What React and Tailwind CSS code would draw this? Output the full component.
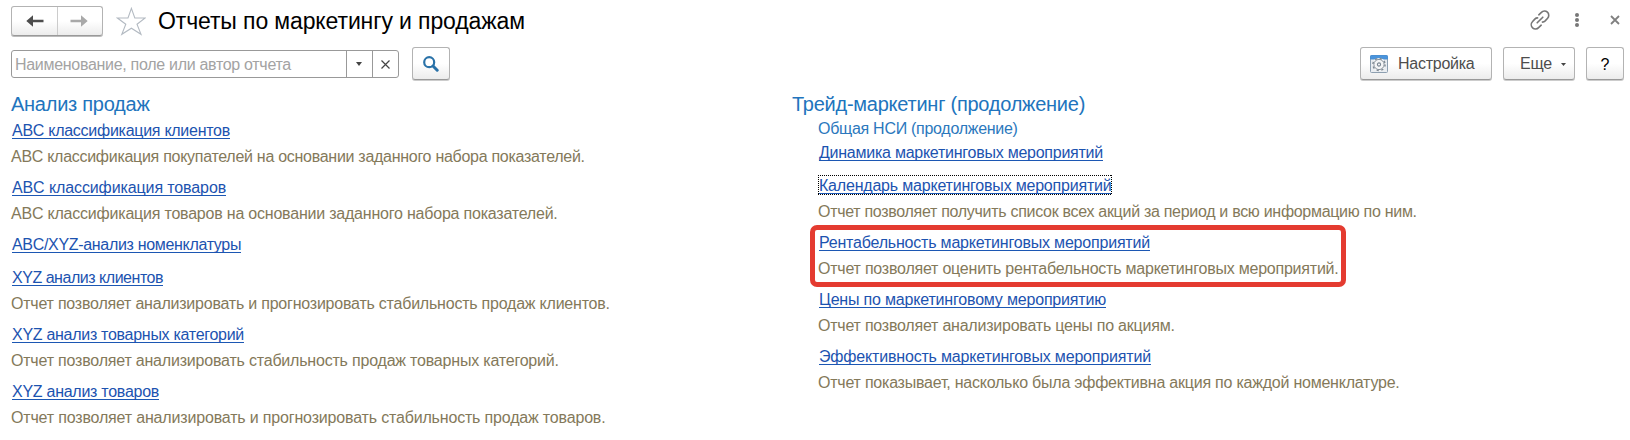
const salesReports = [
  { title: 'ABC классификация клиентов', tk: 'tracking-[-0.27px]', text: 'ABC классификация покупателей на основании заданного набора показателей.', dk: 'tracking-[-0.283px]' },
  { title: 'ABC классификация товаров', tk: 'tracking-[-0.11px]', text: 'ABC классификация товаров на основании заданного набора показателей.', dk: 'tracking-[-0.212px]' },
  { title: 'ABC/XYZ-анализ номенклатуры', tk: 'tracking-[-0.32px]' },
  { title: 'XYZ анализ клиентов', tk: 'tracking-[-0.47px]', text: 'Отчет позволяет анализировать и прогнозировать стабильность продаж клиентов.', dk: 'tracking-[-0.221px]' },
  { title: 'XYZ анализ товарных категорий', tk: 'tracking-[-0.286px]', text: 'Отчет позволяет анализировать стабильность продаж товарных категорий.', dk: 'tracking-[-0.2px]' },
  { title: 'XYZ анализ товаров', tk: 'tracking-[-0.267px]', text: 'Отчет позволяет анализировать и прогнозировать стабильность продаж товаров.', dk: 'tracking-[-0.172px]' },
];

const tradeReports = [
  { title: 'Динамика маркетинговых мероприятий', tk: 'tracking-[-0.25px]' },
  { title: 'Календарь маркетинговых мероприятий', tk: 'tracking-[-0.2px]', text: 'Отчет позволяет получить список всех акций за период и всю информацию по ним.', dk: 'tracking-[-0.298px]', focused: true },
  { title: 'Рентабельность маркетинговых мероприятий', tk: 'tracking-[-0.2px]', text: 'Отчет позволяет оценить рентабельность маркетинговых мероприятий.', dk: 'tracking-[-0.222px]', marked: true },
  { title: 'Цены по маркетинговому мероприятию', tk: 'tracking-[-0.185px]', text: 'Отчет позволяет анализировать цены по акциям.', dk: 'tracking-[-0.224px]' },
  { title: 'Эффективность маркетинговых мероприятий', tk: 'tracking-[-0.177px]', text: 'Отчет показывает, насколько была эффективна акция по каждой номенклатуре.', dk: 'tracking-[-0.226px]' },
];

const button =
  'flex h-[33px] items-center rounded-[3px] border border-[#b3b3b3] border-b-[#999] bg-linear-to-b from-white from-50% to-[#ececec] shadow-[0_1px_0_#ccc]';

function Report({ title, tk, text, dk, focused, marked }) {
  return (
    <li className={`relative flex flex-col items-start ${text ? 'h-[57px]' : 'h-[33px]'}`}>
      <a href="#" className={`relative ml-px h-[19px] border-b border-[#1c57b3] leading-[22px] text-[#1c53b0] ${tk}`}>
        {title}
        {focused && (
          <svg className="absolute top-0 -left-px h-[21px] w-[294px]" fill="none" stroke="#000" strokeDasharray="1 1" shapeRendering="crispEdges">
            <path d="M0 0.5H294M0 19.5H294M0.5 0V20M293.5 0V20" />
          </svg>
        )}
      </a>
      {text && <p className={`mt-[7px] leading-[22px] text-[#84795a] ${dk}`}>{text}</p>}
      {marked && <div className="absolute -top-[7px] -left-2 h-[62px] w-[536px] rounded-[7px] border-5 border-[#e43b30]" />}
    </li>
  );
}

function NavArrow({ flip, color }) {
  return (
    <svg width="18" height="12" viewBox="0 0 18 12" fill={color} className={flip ? 'rotate-180' : ''}>
      <path d="M0.3 6 L7 0.2 V4.7 H17.5 V7.3 H7 V11.8 Z" />
    </svg>
  );
}

function SettingsIcon() {
  return (
    <svg width="18" height="18" viewBox="0 0 18 18" fill="none">
      <rect x="0.5" y="0.5" width="17" height="17" rx="1" fill="#e9edf1" stroke="#8d9fb0" />
      <path d="M0.5 4V1.5a1 1 0 0 1 1-1h15a1 1 0 0 1 1 1V4z" fill="#4a94dc" stroke="#4a8fd2" />
      <circle cx="9" cy="9.5" r="6.6" fill="#f4f5f6" />
      <circle cx="9" cy="9.5" r="6.1" stroke="#7f8a94" strokeWidth="1.4" strokeDasharray="2.2 2.59" />
      <circle cx="9" cy="9.5" r="5.1" stroke="#7f8a94" strokeWidth="0.9" />
      <circle cx="9" cy="9.5" r="1.6" stroke="#788591" strokeWidth="1.1" />
    </svg>
  );
}

export default function App() {
  return (
    <main className="h-[440px] w-[1630px] overflow-hidden bg-white font-['Liberation_Sans',Arial,sans-serif] text-base whitespace-nowrap">
      <header className="flex h-[47px] items-start pt-1.5 pr-[6px] pl-[11px]">
        <div className="flex h-[30px] w-[92px] rounded-[3px] border border-[#b3b3b3] border-b-[#999] bg-linear-to-b from-white from-50% to-[#ececec] shadow-[0_1px_0_#bbb]">
          <button className="flex w-[46px] items-center justify-center border-r border-[#ccc]"><NavArrow color="#4d4d4d" /></button>
          <button className="flex flex-1 items-center justify-center pr-0.5"><NavArrow flip color="#a9a9a9" /></button>
        </div>
        <svg className="mt-px ml-[13px]" width="30" height="29" viewBox="0 0 30 29" fill="none" stroke="#b3bac2" strokeWidth="1.1">
          <path d="M15.4 1.4 L18.8 11 H29.2 L21 17.2 L25 27.3 L15.4 21.2 L5.8 27.3 L9.8 17.2 L1.4 11 H12 Z" />
        </svg>
        <h1 className="ml-3 text-[23px] leading-[30px] tracking-[-0.12px] text-black">Отчеты по маркетингу и продажам</h1>
        <div className="ml-auto flex h-7 items-center">
          <svg width="20" height="20" viewBox="0 0 20 20" fill="none" stroke="#777" strokeWidth="1.6" strokeLinecap="round">
            <path d="M8.8 4.8 L11.4 2.4 A3.9 3.9 0 0 1 17.6 8.2 L15.2 10.9 A4 4 0 0 1 12.4 12.1" />
            <path d="M11.2 15.2 L8.6 17.6 A3.9 3.9 0 0 1 2.4 11.8 L4.8 9.1 A4 4 0 0 1 7.6 7.9" />
            <path d="M7.2 12.8 L12.8 7.2" />
          </svg>
          <svg className="ml-[24px]" width="6" height="16" viewBox="0 0 6 16" fill="#777">
            <circle cx="3" cy="3" r="2" /><circle cx="3" cy="8" r="2" /><circle cx="3" cy="13" r="2" />
          </svg>
          <svg className="mr-[4px] ml-[30px]" width="10" height="10" viewBox="0 0 10 10" stroke="#808080" strokeWidth="1.8">
            <path d="M1 1 L9 9 M9 1 L1 9" />
          </svg>
        </div>
      </header>

      <div className="flex h-[45px] items-start pr-[6px] pl-[11px]">
        <div className="mt-[3px] flex h-7 w-[388px] rounded-[3px] border border-[#999] bg-white">
          <span className="w-[335px] border-r border-[#999] pl-[3px] leading-[27px] tracking-[-0.3px] text-[#a3a3a3]">Наименование, поле или автор отчета</span>
          <button className="flex w-[26px] items-center justify-center border-r border-[#999] pr-px">
            <svg width="6" height="4" viewBox="0 0 6 4" fill="#444"><path d="M0 0H6L3 4Z" /></svg>
          </button>
          <button className="flex flex-1 items-center justify-center pr-px">
            <svg width="9" height="9" viewBox="0 0 9 9" stroke="#444" strokeWidth="1.2"><path d="M0.5 0.5L8.5 8.5M8.5 0.5L0.5 8.5" /></svg>
          </button>
        </div>
        <button className={`${button} ml-[13px] w-[38px] justify-center pr-px`}>
          <svg width="16" height="16" viewBox="0 0 16 16" fill="none" stroke="#2a72a8">
            <circle cx="6.2" cy="6.2" r="5" strokeWidth="2.2" />
            <path d="M10 10 L14.2 14.2" strokeWidth="3" strokeLinecap="round" />
          </svg>
        </button>
        <button className={`${button} ml-auto w-[132px] pl-[9px] text-[#4d4d4d]`}>
          <SettingsIcon />
          <span className="ml-2.5 tracking-[-0.25px]">Настройка</span>
        </button>
        <button className={`${button} ml-[11px] w-[72px] pl-4 text-[#4d4d4d]`}>
          <span className="tracking-[-0.2px]">Еще</span>
          <svg className="mt-px ml-[9px]" width="5" height="3" viewBox="0 0 5 3" fill="#444"><path d="M0 0H5L2.5 3Z" /></svg>
        </button>
        <button className={`${button} ml-[11px] w-[38px] justify-center pt-0.5 text-black`}>?</button>
      </div>

      <div className="flex pl-[11px]">
        <section className="w-[781px]">
          <h2 className="h-7 text-[20px] leading-6 tracking-[-0.26px] text-[#2174bd]">Анализ продаж</h2>
          <ul>{salesReports.map((r) => <Report key={r.title} {...r} />)}</ul>
        </section>
        <section>
          <h2 className="h-[27px] text-[20px] leading-6 tracking-[-0.25px] text-[#2174bd]">Трейд-маркетинг (продолжение)</h2>
          <div className="pl-[26px]">
            <h3 className="h-[23px] leading-5 tracking-[-0.28px] text-[#2b78bd]">Общая НСИ (продолжение)</h3>
            <ul>{tradeReports.map((r) => <Report key={r.title} {...r} />)}</ul>
          </div>
        </section>
      </div>
    </main>
  );
}
